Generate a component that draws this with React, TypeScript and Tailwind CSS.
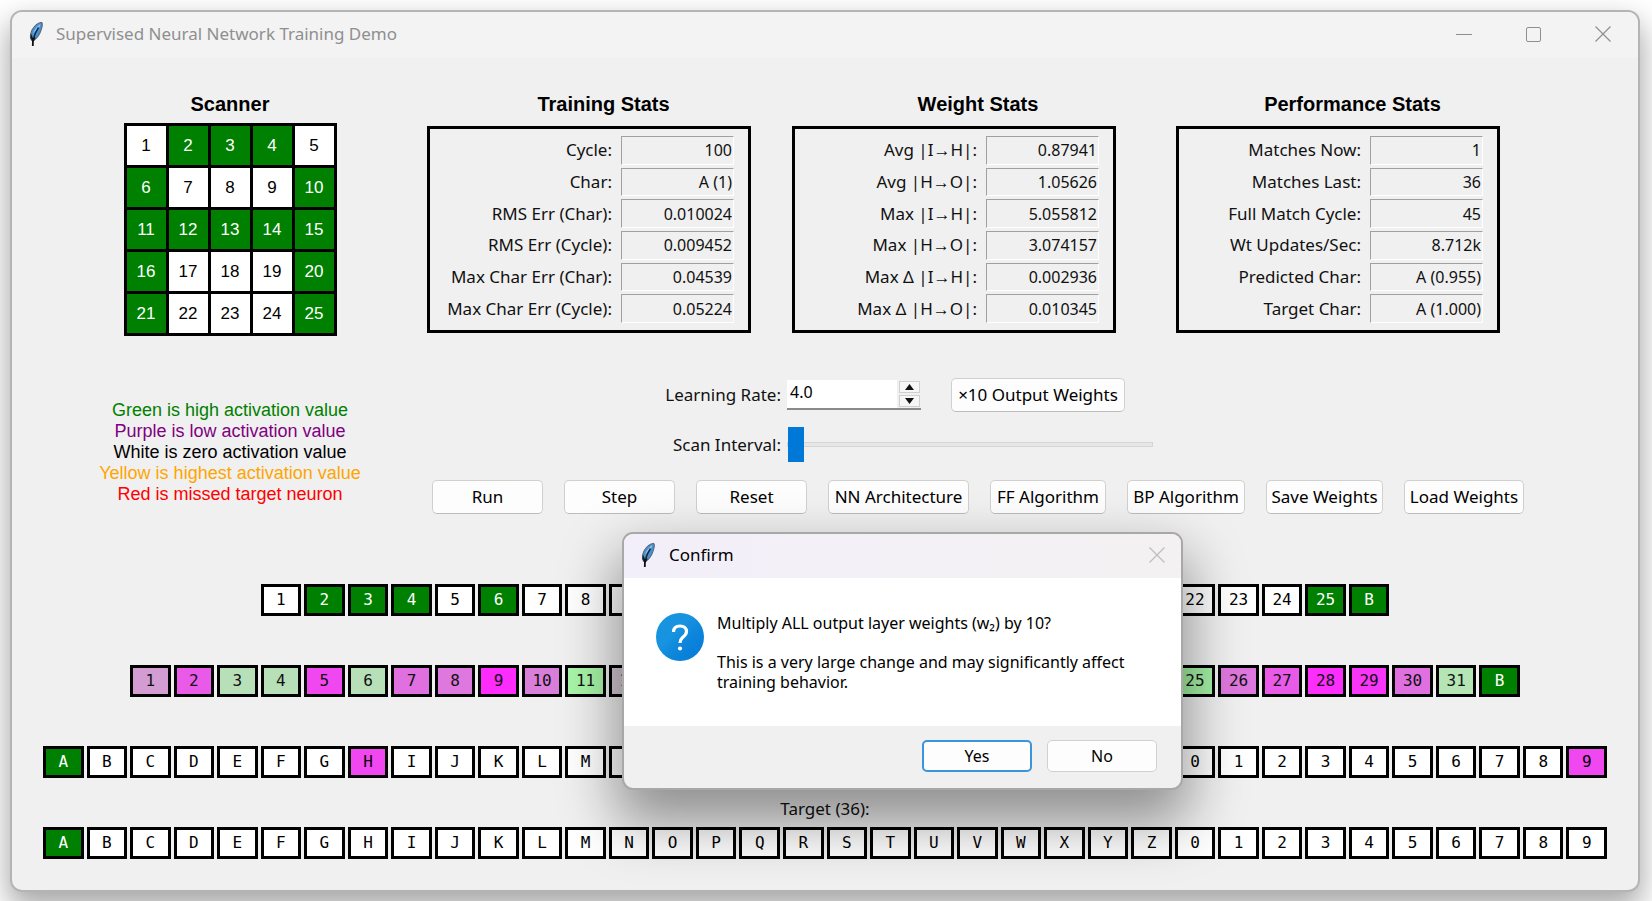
import type { ReactNode } from 'react';

const TRAINING = [
  ['Cycle:', '100'],
  ['Char:', 'A (1)'],
  ['RMS Err (Char):', '0.010024'],
  ['RMS Err (Cycle):', '0.009452'],
  ['Max Char Err (Char):', '0.04539'],
  ['Max Char Err (Cycle):', '0.05224'],
];

const WEIGHTS = [
  ['Avg |I→H|:', '0.87941'],
  ['Avg |H→O|:', '1.05626'],
  ['Max |I→H|:', '5.055812'],
  ['Max |H→O|:', '3.074157'],
  ['Max Δ |I→H|:', '0.002936'],
  ['Max Δ |H→O|:', '0.010345'],
];

const PERFORMANCE = [
  ['Matches Now:', '1'],
  ['Matches Last:', '36'],
  ['Full Match Cycle:', '45'],
  ['Wt Updates/Sec:', '8.712k'],
  ['Predicted Char:', 'A (0.955)'],
  ['Target Char:', 'A (1.000)'],
];

// pixels of the letter A on the 5x5 retina
const ON = [2, 3, 4, 6, 10, 11, 12, 13, 14, 15, 16, 20, 21, 25];
const CHARS = 'ABCDEFGHIJKLMNOPQRSTUVWXYZ0123456789'.split('');

const GREEN = 'bg-[#008000] text-white';
const WHITE = 'bg-white text-black';

const HIDDEN_COLORS: Record<number, string> = {
  1: 'bg-[#d39cd3]',
  2: 'bg-[#e95ae9]',
  3: 'bg-[#b8e0b8]',
  4: 'bg-[#b8e0b8]',
  5: 'bg-[#f047f0]',
  6: 'bg-[#b8e0b8]',
  7: 'bg-[#e070e0]',
  8: 'bg-[#de78de]',
  9: 'bg-[#fc2cfc]',
  10: 'bg-[#d97fd9]',
  11: 'bg-[#a8f5a8]',
  12: 'bg-[#d3c8d3]',
  25: 'bg-[#a5f2a5]',
  26: 'bg-[#de78de]',
  27: 'bg-[#e95ae9]',
  28: 'bg-[#fb2efb]',
  29: 'bg-[#f736f7]',
  30: 'bg-[#e070e0]',
  31: 'bg-[#b5e5b5]',
};

type Cell = { label: string; tone: string };

const range = (n: number) => Array.from({ length: n }, (_, i) => i + 1);

const INPUT: Cell[] = [
  ...range(25).map(n => ({ label: String(n), tone: ON.includes(n) ? GREEN : WHITE })),
  { label: 'B', tone: GREEN },
];
const HIDDEN: Cell[] = [
  ...range(31).map(n => ({ label: String(n), tone: HIDDEN_COLORS[n] || 'bg-[#d8d8d8]' })),
  { label: 'B', tone: GREEN },
];
const OUTPUT: Cell[] = CHARS.map(c => ({
  label: c,
  tone: c === 'A' ? GREEN : c === 'H' || c === '9' ? 'bg-[#f047f0] text-black' : WHITE,
}));
const TARGET: Cell[] = CHARS.map(c => ({ label: c, tone: c === 'A' ? GREEN : WHITE }));

function Feather() {
  return (
    <svg width="16" height="26" viewBox="0 0 16 26" aria-hidden="true">
      <path d="M14 1.500C11 1.200 7.500 3.500 5.500 6.500C3.200 9.500 2 13.500 2.500 17.500L4.500 20.500C8 18.500 11.500 14.500 13 9.500C14 6.500 14.800 3.500 14 1.500Z" fill="#4a90cf" stroke="#54606b" strokeWidth="1" />
      <path d="M12.500 3C9.500 4.500 6.500 8 5 12.500L8 10C10.500 8 12 5.500 12.500 3Z" fill="#8cc0ee" />
      <path d="M3 12.500C2.300 15 2.300 17 3.200 18.500L5 21L7.500 17.500L6.500 14L5 17Z" fill="#16202b" />
      <path d="M10.500 6.500C8.500 9.500 6.800 13 6 16" fill="none" stroke="#14293f" strokeWidth="1.500" />
      <path d="M5 17L4.800 25" fill="none" stroke="#111" strokeWidth="1.800" />
    </svg>
  );
}

function CloseIcon() {
  return (
    <svg width="16" height="16" viewBox="0 0 16 16" aria-hidden="true">
      <path d="M0.500 0.500L15.500 15.500M15.500 0.500L0.500 15.500" stroke="currentColor" strokeWidth="1.200" />
    </svg>
  );
}

function Heading({ children }: { children: ReactNode }) {
  return <h2 className="font-['Liberation_Sans',Arial,sans-serif] text-[20px] leading-6 font-bold text-center text-black">{children}</h2>;
}

function StatsPanel({ title, rows, width }: { title: string; rows: string[][]; width: string }) {
  return (
    <section className={width}>
      <Heading>{title}</Heading>
      <table className="mt-[10px] h-[207px] w-[324px] border-[3px] border-black border-separate border-spacing-x-0 border-spacing-y-[3px] py-1 pr-[14px]">
        <tbody>
          {rows.map(([label, value]) => (
            <tr key={label}>
              <th scope="row" className="p-0 pr-[9px] text-[17px] leading-6 font-normal text-right whitespace-nowrap">{label}</th>
              <td className="p-0 pr-px w-[113px] text-[16px] leading-6 text-right border border-t-[#a0a0a0] border-l-[#a0a0a0] border-b-white border-r-white">{value}</td>
            </tr>
          ))}
        </tbody>
      </table>
    </section>
  );
}

function Button({ children, className }: { children: ReactNode; className: string }) {
  return (
    <button className={`h-[34px] shrink-0 rounded-[5px] border border-[#d0d0d0] border-b-[#bcbcbc] bg-[#fdfdfd] text-center whitespace-nowrap text-black ${className}`}>
      {children}
    </button>
  );
}

function NeuronRow({ cells, caption }: { cells: Cell[]; caption?: string }) {
  return (
    <div>
      <div className="h-[49px] pt-[19px] text-center leading-6">{caption}</div>
      <div className="grid grid-cols-[repeat(36,minmax(0,1fr))] gap-[3px] font-['DejaVu_Sans_Mono',monospace] text-[16px]">
        {cells.map((c, i) => (
          <div
            key={i}
            style={i === 0 ? { gridColumnStart: (36 - cells.length) / 2 + 1 } : undefined}
            className={`h-8 border-[3px] border-black flex items-center justify-center ${c.tone}`}
          >
            {c.label}
          </div>
        ))}
      </div>
    </div>
  );
}

function ConfirmDialog() {
  return (
    <div
      role="dialog"
      aria-labelledby="confirm-title"
      className="absolute top-[520px] left-1/2 -ml-[203px] w-[561px] rounded-[11px] border-2 border-[#a8a8a8] bg-[#f0f0f0] overflow-hidden shadow-[0_28px_56px_6px_rgba(0,0,0,0.4)]"
    >
      <header className="h-11 flex items-center px-4 pb-0.5 bg-linear-to-r from-[#f3effa] to-[#f4f1f2]">
        <Feather />
        <h1 id="confirm-title" className="ml-[13px] flex-1 text-[17px] text-black">Confirm</h1>
        <button aria-label="Close" className="text-[#bdbdbd]"><CloseIcon /></button>
      </header>
      <div className="h-[148px] bg-white flex pl-8 pt-[35px]">
        <svg width="48" height="48" viewBox="0 0 48 48" aria-hidden="true" className="shrink-0">
          <defs>
            <linearGradient id="ask" x1="0" y1="0" x2="1" y2="1">
              <stop offset="0.400" stopColor="#1793e0" />
              <stop offset="0.600" stopColor="#0d86dc" />
              <stop offset="1" stopColor="#0378d6" />
            </linearGradient>
          </defs>
          <circle cx="24" cy="24" r="24" fill="url(#ask)" />
          <path d="M17.500 19C17.500 15 20 13 24 13C28 13 30.500 15.200 30.500 18.500C30.500 21.500 28.500 22.800 26.500 24.500C24.800 26 24 27 24 30" fill="none" stroke="#fff" strokeWidth="3.200" />
          <circle cx="24" cy="35.500" r="2.100" fill="#fff" />
        </svg>
        <div className="ml-[13px] text-[16px] leading-[20px] text-black">
          <p>Multiply ALL output layer weights (w₂) by 10?</p>
          <p className="mt-[19px]">This is a very large change and may significantly affect<br />training behavior.</p>
        </div>
      </div>
      <footer className="h-[62px] flex gap-[15px] justify-end items-start pt-[14px] pr-6 text-[16px]">
        <button className="h-8 w-[110px] rounded-[5px] border-2 border-[#3b95dd] bg-[#fdfdfd] text-black">Yes</button>
        <button className="h-8 w-[110px] rounded-[5px] border border-[#d0d0d0] bg-[#fdfdfd] text-black">No</button>
      </footer>
    </div>
  );
}

export default function App() {
  return (
    <div className="min-h-screen p-[10px] pr-3 pb-[9px] bg-white overflow-hidden font-['Noto_Sans','Segoe_UI',sans-serif] text-[17px] text-[#111]">
      <main className="relative rounded-xl border-2 border-[#b4b4b4] bg-[#f0f0f0] shadow-[0_14px_30px_2px_rgba(0,0,0,0.35)]">
        <header className="h-[46px] flex items-center pl-4 pb-0.5 rounded-t-[10px] bg-[#f3f3f3] text-[#8f8f8f]">
          <Feather />
          <h1 className="ml-3 flex-1 text-[17px]">Supervised Neural Network Training Demo</h1>
          <div className="flex items-center gap-[54px] pr-[27px]">
            <button aria-label="Minimize" className="h-4 w-4 flex items-center"><span className="h-px w-full bg-[#8f8f8f]" /></button>
            <button aria-label="Maximize" className="h-[15px] w-[15px] rounded-[2px] border border-[#8f8f8f]" />
            <button aria-label="Close"><CloseIcon /></button>
          </div>
        </header>

        <div className="flex pt-[34px] pl-[78px]">
          <div className="w-[280px] shrink-0 flex flex-col items-center">
            <Heading>Scanner</Heading>
            <div className="mt-[7px] grid grid-cols-[repeat(5,39px)] gap-[3px] border-[3px] border-black bg-black font-['Liberation_Sans',Arial,sans-serif] text-[17px]">
              {range(25).map(n => (
                <div key={n} className={`h-[39px] flex items-center justify-center ${ON.includes(n) ? GREEN : WHITE}`}>{n}</div>
              ))}
            </div>
            <div className="mt-16 text-center font-['Liberation_Sans',Arial,sans-serif] text-[18px] leading-[21px] whitespace-nowrap">
              <p className="text-[#008000]">Green is high activation value</p>
              <p className="text-[#800080]">Purple is low activation value</p>
              <p className="text-black">White is zero activation value</p>
              <p className="text-[#ffa500]">Yellow is highest activation value</p>
              <p className="text-[#ff0000]">Red is missed target neuron</p>
            </div>
          </div>

          <div className="flex-1 ml-[57px]">
            <div className="flex gap-3">
              <StatsPanel title="Training Stats" rows={TRAINING} width="w-[353px]" />
              <StatsPanel title="Weight Stats" rows={WEIGHTS} width="w-[372px]" />
              <StatsPanel title="Performance Stats" rows={PERFORMANCE} width="w-[353px]" />
            </div>

            <div className="mt-[45px] flex items-center">
              <label htmlFor="rate" className="w-[360px] pr-[6px] text-right">Learning Rate:</label>
              <div className="h-[30px] w-[134px] flex border-b-2 border-[#8a8a8a]">
                <input id="rate" defaultValue="4.0" className="min-w-0 flex-1 bg-white pl-[3px] pb-1 text-[16px] text-black outline-none" />
                <div className="w-[24px] flex flex-col items-center gap-0.5 pt-px">
                  <button aria-label="Increase" className="h-3 w-[21px] border border-[#d0d0d0] bg-[#f6f6f6] flex items-center justify-center">
                    <svg width="9" height="6" viewBox="0 0 9 6"><path d="M4.500 0L9 6H0Z" fill="#111" /></svg>
                  </button>
                  <button aria-label="Decrease" className="h-3 w-[21px] border border-[#d0d0d0] bg-[#f6f6f6] flex items-center justify-center">
                    <svg width="9" height="6" viewBox="0 0 9 6"><path d="M4.500 6L9 0H0Z" fill="#111" /></svg>
                  </button>
                </div>
              </div>
              <Button className="ml-[30px] w-[174px]">×10 Output Weights</Button>
            </div>

            <div className="mt-[15px] flex items-center">
              <label htmlFor="scan" className="w-[360px] pr-[6px] text-right">Scan Interval:</label>
              <input
                id="scan"
                type="range"
                defaultValue={0}
                className="h-[35px] w-[366px] appearance-none bg-transparent [&::-webkit-slider-runnable-track]:h-[5px] [&::-webkit-slider-runnable-track]:border [&::-webkit-slider-runnable-track]:border-[#d6d6d6] [&::-webkit-slider-runnable-track]:bg-[#e7e7e7] [&::-webkit-slider-thumb]:appearance-none [&::-webkit-slider-thumb]:h-[35px] [&::-webkit-slider-thumb]:w-4 [&::-webkit-slider-thumb]:-mt-4 [&::-webkit-slider-thumb]:bg-[#0078d7]"
              />
            </div>

            <div className="mt-[18px] ml-[5px] flex gap-[21px]">
              <Button className="w-[111px]">Run</Button>
              <Button className="w-[111px]">Step</Button>
              <Button className="w-[111px]">Reset</Button>
              <Button className="w-[141px]">NN Architecture</Button>
              <Button className="w-[116px]">FF Algorithm</Button>
              <Button className="w-[118px]">BP Algorithm</Button>
              <Button className="w-[117px]">Save Weights</Button>
              <Button className="w-[120px]">Load Weights</Button>
            </div>
          </div>
        </div>

        <div className="mt-[21px] px-[31px] pb-[31px]">
          <NeuronRow cells={INPUT} />
          <NeuronRow cells={HIDDEN} />
          <NeuronRow cells={OUTPUT} />
          <NeuronRow cells={TARGET} caption="Target (36):" />
        </div>

        <ConfirmDialog />
      </main>
    </div>
  );
}
